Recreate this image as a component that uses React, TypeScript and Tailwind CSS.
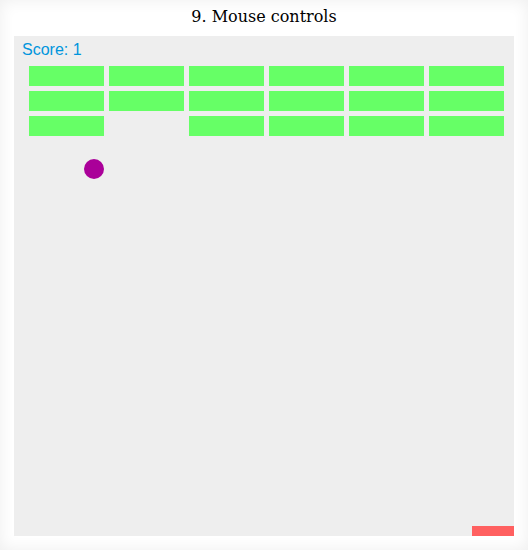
import React from "react";

const rows = [
  [1, 1, 1, 1, 1, 1],
  [1, 1, 1, 1, 1, 1],
  [1, 0, 1, 1, 1, 1],
];

export default function App() {
  return (
    <div className="w-[528px] h-[550px] bg-white shadow-[inset_0_0_16px_rgba(0,0,0,0.07)] flex flex-col items-center overflow-hidden">
      <div className="h-[36px] flex items-center justify-center text-[16px] text-black [font-family:'DejaVu_Serif',serif] leading-none pb-[2px]">
        9. Mouse controls
      </div>
      <div className="relative w-[500px] h-[500px] bg-[#eeeeee] shrink-0 overflow-hidden">
        <div className="absolute left-[8px] top-[5px] text-[16px] leading-[18px] text-[#0095DD] [font-family:'Liberation_Sans',Arial,sans-serif]">
          Score: 1
        </div>
        <div className="pt-[30px] pl-[15px] grid grid-cols-[repeat(6,75px)] gap-[5px]">
          {rows.flat().map((v, i) => (
            <div key={i} className={v ? "h-[20px] bg-[#66ff66]" : "h-[20px]"} />
          ))}
        </div>
        <div className="absolute left-[70px] top-[123px] w-[20px] h-[20px] rounded-full bg-[#aa0099]" />
        <div className="absolute left-[458px] top-[490px] w-[75px] h-[10px] bg-[#ff6060]" />
      </div>
    </div>
  );
}
